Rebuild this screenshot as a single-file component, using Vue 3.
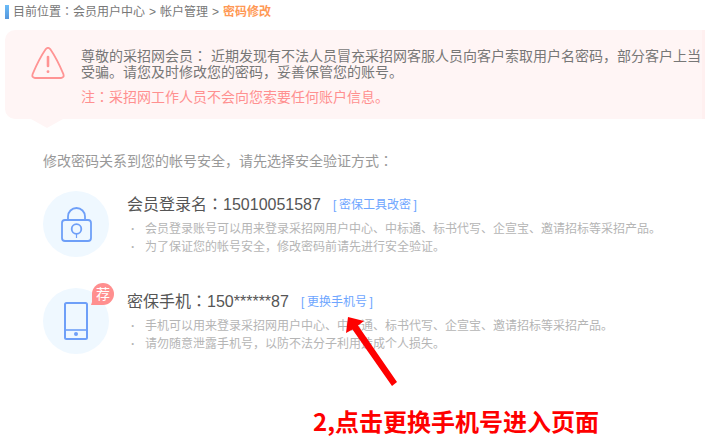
<script setup>
const alertLines = {
  greeting: '尊敬的采招网会员',
  body: '近期发现有不法人员冒充采招网客服人员向客户索取用户名密码，部分客户上当受骗。请您及时修改您的密码，妥善保管您的账号。',
  note: '采招网工作人员不会向您索要任何账户信息。',
}

const methods = [
  {
    id: 'account',
    label: '会员登录名',
    value: '15010051587',
    action: '密保工具改密',
    notes: [
      '会员登录账号可以用来登录采招网用户中心、中标通、标书代写、企宣宝、邀请招标等采招产品。',
      '为了保证您的帐号安全，修改密码前请先进行安全验证。',
    ],
  },
  {
    id: 'phone',
    label: '密保手机',
    value: '150******87',
    action: '更换手机号',
    badge: '荐',
    notes: [
      '手机可以用来登录采招网用户中心、中标通、标书代写、企宣宝、邀请招标等采招产品。',
      '请勿随意泄露手机号，以防不法分子利用造成个人损失。',
    ],
  },
]
</script>

<template>
  <main class="page">
    <nav class="crumbs" aria-label="位置">
      <span class="mark"></span>
      <span>目前位置<span class="colon">：</span>会员用户中心</span>
      <span class="sep">&gt;</span>
      <span>帐户管理</span>
      <span class="sep">&gt;</span>
      <strong class="current">密码修改</strong>
    </nav>

    <section class="alert">
      <svg class="warn" viewBox="0 0 34 32" fill="none" stroke="#ff9494" stroke-linecap="round" stroke-linejoin="round">
        <path d="M14.8 2.1Q17 -.4 19.2 2.1Q26 12 32.4 27.2Q33.5 30.6 30 31H4Q.5 30.6 1.6 27.2Q8 12 14.8 2.1Z" stroke-width="1.8" />
        <path d="M17 10V19" stroke-width="2.6" />
        <path d="M17 24.6V24.7" stroke-width="2.8" />
      </svg>
      <div class="alert-text">
        <p>{{ alertLines.greeting }}<span class="colon">：</span> {{ alertLines.body }}</p>
        <p class="note">注<span class="colon">：</span>{{ alertLines.note }}</p>
      </div>
    </section>

    <h1 class="prompt">修改密码关系到您的帐号安全，请先选择安全验证方式<span class="colon">：</span></h1>

    <ul class="methods">
      <li v-for="m in methods" :key="m.id" class="method">
        <div class="icon">
          <svg v-if="m.id === 'account'" viewBox="0 0 66 66" fill="none" stroke="#6e9ff8" stroke-width="1.8">
            <path d="M25 28V25.5A8.5 8.5 0 0 1 42 25.5V28" />
            <rect x="19" y="29" width="29" height="21" rx="3" />
            <circle cx="33.5" cy="38" r="4.8" />
            <path d="M33.5 43V47" stroke-width="1.2" />
          </svg>
          <svg v-else viewBox="0 0 66 66" fill="none" stroke="#6e9ff8" stroke-width="2">
            <rect x="22" y="15" width="22" height="36" rx="1.5" />
            <path d="M22 42H44" stroke-width="1.6" />
            <circle cx="33" cy="46" r="2" fill="#6e9ff8" stroke="none" />
          </svg>
          <span v-if="m.badge" class="badge">
            <svg viewBox="0 0 22 22" fill="#ff8f8f"><circle cx="11" cy="11" r="11" /><path d="M0 10V19L-1 22H11Z" /></svg>
            <span>{{ m.badge }}</span>
          </span>
        </div>
        <div class="detail">
          <h2>
            <span>{{ m.label }}<span class="colon">：</span>{{ m.value }}</span>
            <a href="#" class="action"><span class="bracket">[</span>{{ m.action }}<span class="bracket close">]</span></a>
          </h2>
          <ul class="notes">
            <li v-for="n in m.notes" :key="n">{{ n }}</li>
          </ul>
        </div>
      </li>
    </ul>

    <svg class="arrow" viewBox="0 0 54 72" fill="#fe0000">
      <path d="M4 1L20 5L14 9.5L53 66L48 70L8.500 13.500L2 17Z" />
    </svg>
    <p class="caption">2,点击更换手机号进入页面</p>
  </main>
</template>

<style>
body {
  margin: 0;
  background: #fff;
}
</style>

<style scoped>
.page {
  position: relative;
  font-family: "Liberation Sans", "Noto Sans CJK SC", sans-serif;
  font-size: 12px;
  color: #777;
}

p, h1, h2, ul {
  margin: 0;
  padding: 0;
  font-weight: 400;
  list-style: none;
}

.colon {
  display: inline-block;
  font-family: "Liberation Sans", "Noto Sans CJK JP", sans-serif;
}

.crumbs {
  display: flex;
  align-items: center;
  height: 24px;
  padding-left: 5px;
  line-height: 16px;
}

.mark {
  width: 4px;
  height: 14px;
  margin-right: 4px;
  background: linear-gradient(#6bbcf8, #5596dc);
}

.sep {
  width: 15px;
  text-align: center;
}

.current {
  color: #ff9955;
}

.alert {
  position: relative;
  display: flex;
  gap: 16px;
  margin: 6px 6px 0 5px;
  padding: 17px 0 14px 26px;
  border-right: 3px solid #fff0f0;
  border-radius: 10px 0 0 10px;
  background: #fff5f5;
  font-size: 14px;
  line-height: 16px;
}

.alert::after {
  content: "";
  position: absolute;
  top: 100%;
  left: 26px;
  width: 32px;
  height: 9px;
  background: #fff5f5;
  clip-path: polygon(0 0, 100% 0, 50% 100%);
}

.warn {
  flex: none;
  width: 34px;
  height: 32px;
}

.alert-text {
  padding-top: 1px;
}

.note {
  margin-top: 9px;
  color: #ff9090;
}

.prompt {
  margin: 32px 0 0 43px;
  font-size: 14px;
  line-height: 20px;
  color: #999;
}

.methods {
  display: grid;
  gap: 31px;
  padding: 20px 0 0 43px;
}

.method {
  display: flex;
  gap: 18px;
}

.icon {
  position: relative;
  flex: none;
  width: 66px;
  height: 66px;
  border-radius: 50%;
  background: #eff8ff;
}

.icon > svg {
  display: block;
}

.badge {
  position: absolute;
  top: -5px;
  right: -5px;
  width: 22px;
  height: 22px;
  color: #fff;
  font-size: 14px;
  line-height: 22px;
  text-align: center;
}

.badge svg {
  position: absolute;
  inset: 0;
  overflow: visible;
}

.badge span {
  position: relative;
}

.detail {
  flex: 1;
}

h2 {
  display: flex;
  align-items: center;
  gap: 12px;
  padding-top: 2px;
  font-size: 16px;
  line-height: 24px;
  color: #555;
}

.action {
  font-size: 12px;
  color: #6ea6ff;
  text-decoration: none;
}

.bracket {
  display: inline-block;
  width: 6px;
}

.close {
  text-align: right;
}

.notes {
  padding-top: 3px;
  line-height: 18px;
  color: #b5b5b5;
}

.notes li {
  display: flex;
}

.notes li::before {
  content: "·";
  width: 14px;
  margin-left: 4px;
  font-weight: 700;
}

.arrow {
  position: absolute;
  top: 316px;
  left: 344px;
  width: 54px;
  height: 72px;
}

.caption {
  padding: 51px 0 0 313px;
  font-family: "Noto Sans CJK SC", sans-serif;
  font-size: 24px;
  font-weight: 700;
  line-height: 32px;
  color: #fe0000;
}
</style>
